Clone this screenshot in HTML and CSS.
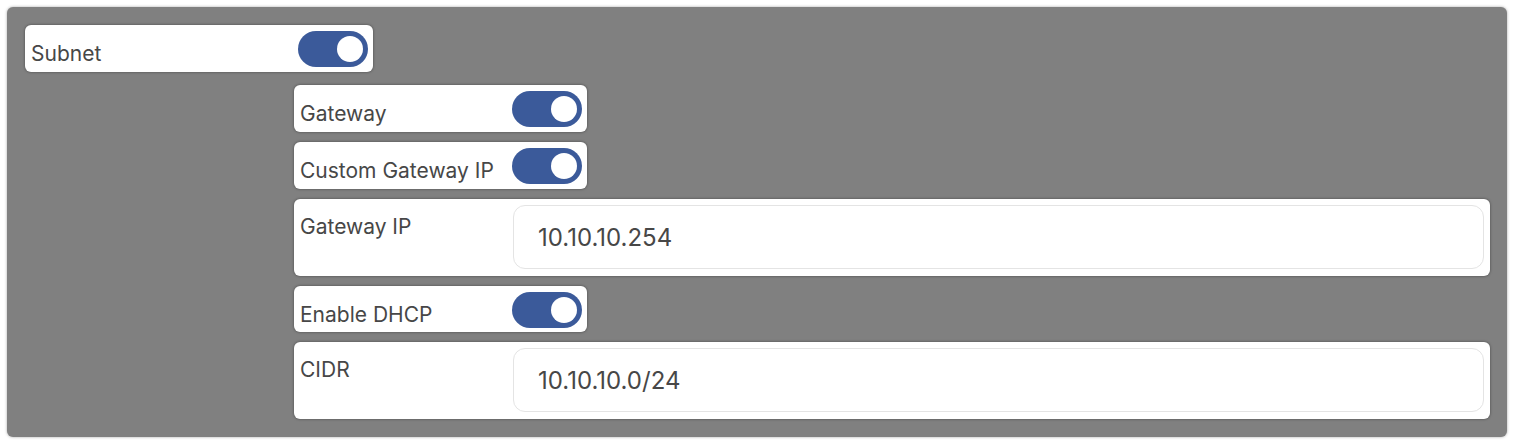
FILE: index.html
```html
<!DOCTYPE html>
<html>
<head>
<meta charset="utf-8">
<link rel="stylesheet" href="styles.css">
</head>
<body>
<div class="panel">
  <div class="card card-root">
    <span class="label">Subnet</span>
    <span class="toggle on"><span class="knob"></span></span>
  </div>
  <div class="children">
    <div class="card card-toggle">
      <span class="label">Gateway</span>
      <span class="toggle on"><span class="knob"></span></span>
    </div>
    <div class="card card-toggle">
      <span class="label">Custom Gateway IP</span>
      <span class="toggle on"><span class="knob"></span></span>
    </div>
    <div class="card card-input">
      <span class="label label-fixed">Gateway IP</span>
      <div class="input">10.10.10.254</div>
    </div>
    <div class="card card-toggle card-short">
      <span class="label">Enable DHCP</span>
      <span class="toggle on"><span class="knob"></span></span>
    </div>
    <div class="card card-input">
      <span class="label label-fixed">CIDR</span>
      <div class="input">10.10.10.0/24</div>
    </div>
  </div>
</div>
</body>
</html>
```
FILE: styles.css
```css
html, body {
  margin: 0;
  padding: 0;
  background: #ffffff;
  font-family: Inter, "Noto Sans", sans-serif;
}

.panel {
  margin: 7px;
  width: 1500px;
  height: 430px;
  box-sizing: border-box;
  background: #808080;
  border-radius: 6px;
  box-shadow: 0 0 3px rgba(0, 0, 0, 0.35);
  padding: 18px 17px 18px 18px;
  display: flex;
  flex-direction: column;
}

.card {
  background: #ffffff;
  border-radius: 6px;
  box-shadow: 0 0 3px rgba(0, 0, 0, 0.45);
  box-sizing: border-box;
  padding: 6px 5px 5px 6px;
  display: flex;
  justify-content: space-between;
  align-items: flex-start;
}

.card-root {
  width: 348px;
  height: 47px;
}

.children {
  margin-left: 269px;
  margin-top: 13px;
  display: flex;
  flex-direction: column;
  gap: 10px;
}

.card-toggle {
  width: 293px;
  height: 47px;
}

.card-short {
  height: 46px;
}

.card-input {
  height: 77px;
  padding: 6px 6px 6px 6px;
}

.label {
  font-size: 21px;
  line-height: 26px;
  margin-top: 10px;
  color: #474747;
  white-space: nowrap;
}

.label-fixed {
  width: 213px;
  flex: none;
  margin-top: 9px;
}

.toggle {
  flex: none;
  width: 70px;
  height: 36px;
  border-radius: 18px;
  background: #3b5a9a;
  position: relative;
}

.knob {
  position: absolute;
  top: 5px;
  right: 5px;
  width: 26px;
  height: 26px;
  border-radius: 50%;
  background: #ffffff;
}

.input {
  flex: 1;
  height: 64px;
  box-sizing: border-box;
  border: 1px solid #e4e4e4;
  border-radius: 12px;
  padding: 2px 0 0 24px;
  font-size: 24px;
  line-height: 60px;
  color: #474747;
}
```
